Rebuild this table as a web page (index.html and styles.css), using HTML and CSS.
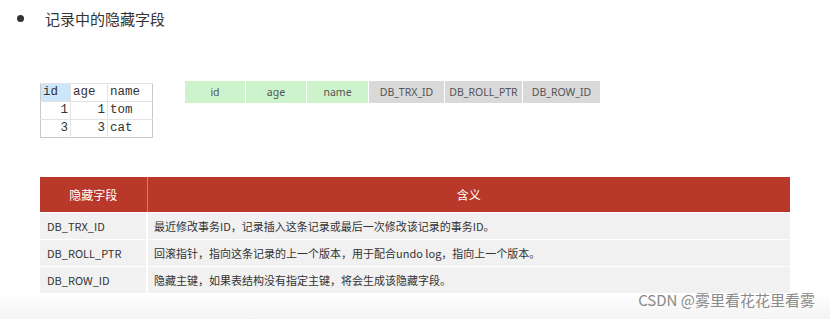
FILE: index.html
```html
<!DOCTYPE html>
<html lang="zh">
<head>
<meta charset="utf-8">
<link rel="stylesheet" href="styles.css">
</head>
<body>
<div class="page">
  <div class="title"><span class="dot"></span><span class="title-text">记录中的隐藏字段</span></div>
  <div class="demo">
    <table class="mini">
      <tr class="mini-head"><td class="sel">id</td><td>age</td><td>name</td></tr>
      <tr><td class="num">1</td><td class="num">1</td><td>tom</td></tr>
      <tr><td class="num">3</td><td class="num">3</td><td>cat</td></tr>
    </table>
    <div class="strip">
      <div class="cell green w60">id</div>
      <div class="cell green w60">age</div>
      <div class="cell green w61">name</div>
      <div class="cell gray w75">DB_TRX_ID</div>
      <div class="cell gray w77">DB_ROLL_PTR</div>
      <div class="cell gray w77">DB_ROW_ID</div>
    </div>
  </div>
  <table class="fields">
    <tr class="head"><th class="c1">隐藏字段</th><th>含义</th></tr>
    <tr><td class="c1">DB_TRX_ID</td><td>最近修改事务ID，记录插入这条记录或最后一次修改该记录的事务ID。</td></tr>
    <tr><td class="c1">DB_ROLL_PTR</td><td>回滚指针，指向这条记录的上一个版本，用于配合undo log，指向上一个版本。</td></tr>
    <tr><td class="c1">DB_ROW_ID</td><td>隐藏主键，如果表结构没有指定主键，将会生成该隐藏字段。</td></tr>
  </table>
  <div class="footer"><span class="mark">CSDN @雾里看花花里看雾</span></div>
</div>
</body>
</html>
```
FILE: styles.css
```css
html, body {
  margin: 0;
  padding: 0;
  background: #ffffff;
}
.page {
  width: 830px;
  height: 319px;
  overflow: hidden;
  font-family: "Noto Sans CJK SC", "Noto Sans", sans-serif;
  color: #333;
}
.title {
  display: flex;
  align-items: center;
  height: 36px;
  padding-left: 17px;
}
.dot {
  width: 7px;
  height: 7px;
  border-radius: 50%;
  background: #333;
}
.title-text {
  margin-left: 21px;
  font-size: 15px;
  color: #333;
}
.demo {
  display: flex;
  align-items: flex-start;
  padding-top: 45px;
  padding-left: 40px;
  height: 55px;
}
.mini {
  margin-top: 2px;
  border-collapse: collapse;
  border: 1px solid #c9c9c9;
  font-family: "Liberation Mono", "DejaVu Sans Mono", monospace;
  font-size: 12.5px;
  color: #333;
}
.mini td {
  height: 17px;
  padding: 0 2px;
  border-top: 1px solid #e3e3e3;
  line-height: 17px;
}
.mini td:nth-child(1) { width: 25px; }
.mini td:nth-child(2) { width: 32px; border-left: 1px solid #e3e3e3; }
.mini td:nth-child(3) { width: 40px; border-left: 1px solid #e3e3e3; }
.mini .sel { background: #cce6fb; }
.mini .num { text-align: right; }
.strip {
  display: flex;
  gap: 1px;
  margin-left: 32px;
}
.cell {
  height: 22px;
  line-height: 22px;
  text-align: center;
  font-family: "Noto Sans", sans-serif;
  font-size: 10.5px;
  color: #555;
  white-space: nowrap;
}
.green { background: #cdf3cd; }
.gray { background: #d9d9d9; }
.w60 { width: 60px; }
.w61 { width: 61px; }
.w75 { width: 75px; }
.w77 { width: 77px; }
.fields {
  margin-left: 40px;
  margin-top: 41px;
  width: 750px;
  border-collapse: collapse;
  font-size: 11px;
}
.fields th {
  height: 35px;
  background: #b8382a;
  color: #fff;
  font-weight: normal;
  font-size: 12px;
  padding: 0;
  border-left: 1px solid #d97a6e;
}
.fields th.c1 { border-left: none; }
.fields td {
  height: 26px;
  background: #f1f1f1;
  border-top: 1px solid #ffffff;
  border-left: 2px solid #ffffff;
  padding: 0 0 0 6px;
  color: #333;
}
.fields td.c1 {
  width: 99px;
  border-left: none;
  padding-left: 7px;
}
.footer {
  display: flex;
  justify-content: flex-end;
  height: 26px;
  padding-right: 15px;
  background: linear-gradient(#ffffff, #f3f3f3);
}
.mark {
  font-family: "Noto Sans CJK SC", sans-serif;
  font-size: 15px;
  line-height: 14px;
  color: #8a8a8a;
}
```
